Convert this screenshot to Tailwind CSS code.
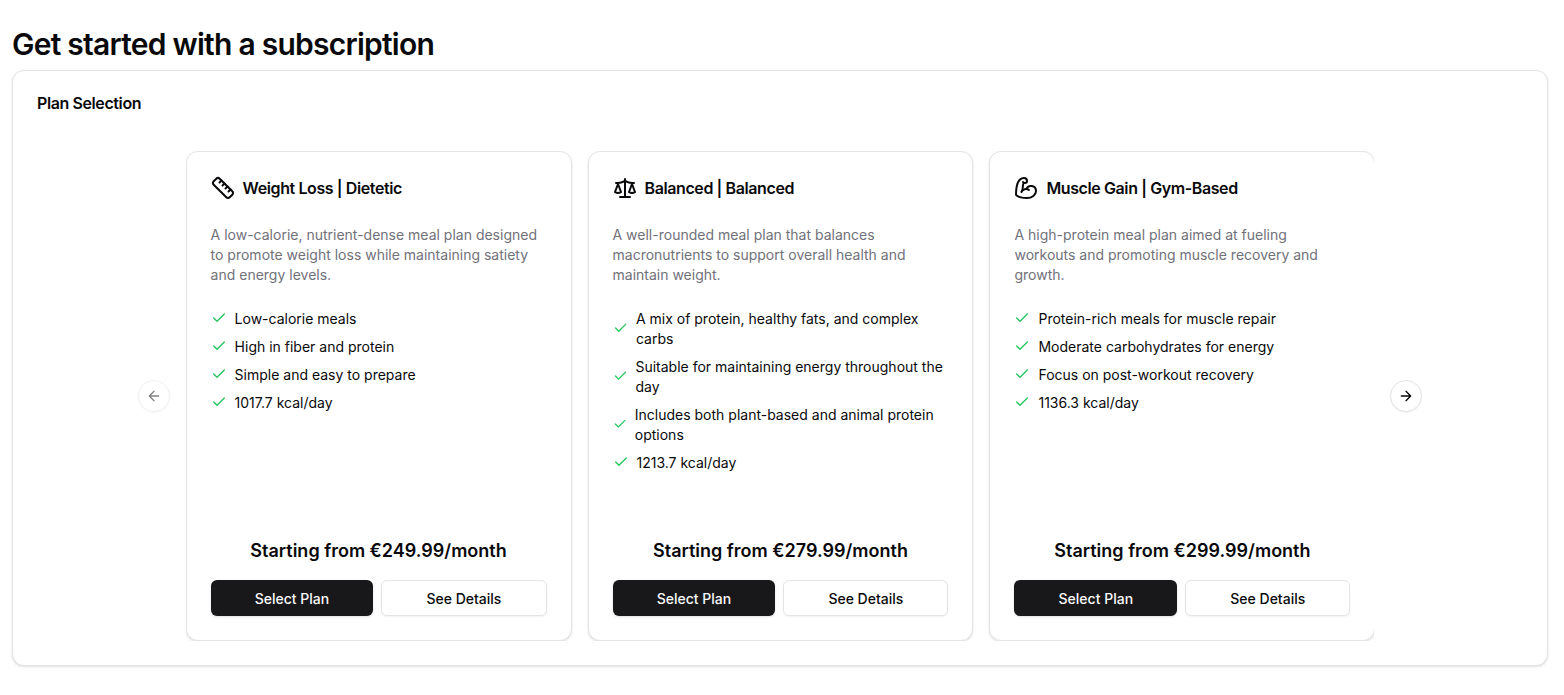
<!DOCTYPE html>
<html lang="en">
<head>
<meta charset="utf-8">
<meta name="viewport" content="width=device-width, initial-scale=1">
<title>Get started with a subscription</title>
<script src="https://cdn.jsdelivr.net/npm/@tailwindcss/browser@4"></script>
</head>
<body class="bg-white font-['Inter',sans-serif] text-[#09090b]">
<svg class="hidden" aria-hidden="true">
  <symbol id="check" viewBox="0 0 24 24" fill="none" stroke="currentColor" stroke-width="2" stroke-linecap="round" stroke-linejoin="round"><path d="M20 6 9 17l-5-5"/></symbol>
</svg>
<main class="pt-[26px] pr-4 pb-7 pl-3">
  <h1 class="text-3xl font-semibold tracking-tight">Get started with a subscription</h1>
  <section class="mt-2 rounded-xl border border-[#e4e4e7] bg-white shadow-sm">
    <h2 class="p-6 leading-none font-semibold tracking-tight">Plan Selection</h2>
    <div class="flex items-center justify-center gap-4 px-6 pt-4 pb-6">
      <button type="button" disabled aria-label="Previous slide" class="flex size-8 shrink-0 items-center justify-center rounded-full border border-[#e4e4e7] bg-white opacity-50 shadow-xs">
        <svg class="size-4" viewBox="0 0 24 24" fill="none" stroke="currentColor" stroke-width="2" stroke-linecap="round" stroke-linejoin="round"><path d="m12 19-7-7 7-7M19 12H5"/></svg>
      </button>
      <div class="w-4/5 overflow-hidden">
        <div class="-mr-px grid grid-cols-3 gap-4">
          <article class="flex flex-col rounded-xl border border-[#e4e4e7] bg-white p-6 shadow-sm">
            <h3 class="flex items-center gap-2 leading-none font-semibold tracking-tight">
              <svg class="size-6 shrink-0" viewBox="0 0 24 24" fill="none" stroke="currentColor" stroke-width="2" stroke-linecap="round" stroke-linejoin="round"><path d="M21.3 15.3a2.4 2.4 0 0 1 0 3.4l-2.6 2.6a2.4 2.4 0 0 1-3.4 0L2.7 8.7a2.41 2.41 0 0 1 0-3.4l2.6-2.6a2.41 2.41 0 0 1 3.4 0Z"/><path d="m14.5 12.5 2-2"/><path d="m11.5 9.5 2-2"/><path d="m8.5 6.5 2-2"/><path d="m17.5 15.5 2-2"/></svg>
              Weight Loss | Dietetic
            </h3>
            <p class="mt-[25px] text-sm text-[#71717a]">A low-calorie, nutrient-dense meal plan designed to promote weight loss while maintaining satiety and energy levels.</p>
            <ul class="mt-6 mb-16 flex flex-col gap-2 text-sm">
              <li class="flex items-center gap-2"><svg class="mb-0.5 h-4 w-4 text-[#22c55e]"><use href="#check"/></svg><span>Low-calorie meals</span></li>
              <li class="flex items-center gap-2"><svg class="mb-0.5 h-4 w-4 text-[#22c55e]"><use href="#check"/></svg><span>High in fiber and protein</span></li>
              <li class="flex items-center gap-2"><svg class="mb-0.5 h-4 w-4 text-[#22c55e]"><use href="#check"/></svg><span>Simple and easy to prepare</span></li>
              <li class="flex items-center gap-2"><svg class="mb-0.5 h-4 w-4 text-[#22c55e]"><use href="#check"/></svg><span>1017.7 kcal/day</span></li>
            </ul>
            <p class="mt-auto text-center text-lg font-semibold">Starting from €249.99/month</p>
            <div class="mt-[15px] flex gap-2">
              <button type="button" class="h-9 grow rounded-md bg-[#18181b] px-4 pt-0.5 text-sm font-medium text-[#fafafa] shadow-sm">Select Plan</button>
              <button type="button" class="h-9 grow rounded-md border border-[#e4e4e7] bg-white px-4 pt-0.5 text-sm font-medium shadow-xs">See Details</button>
            </div>
          </article>
          <article class="flex flex-col rounded-xl border border-[#e4e4e7] bg-white p-6 shadow-sm">
            <h3 class="flex items-center gap-2 leading-none font-semibold tracking-tight">
              <svg class="size-6 shrink-0" viewBox="0 0 24 24" fill="none" stroke="currentColor" stroke-width="2" stroke-linecap="round" stroke-linejoin="round"><path d="m16 16 3-8 3 8c-.87.65-1.92 1-3 1s-2.13-.35-3-1Z"/><path d="m2 16 3-8 3 8c-.87.65-1.92 1-3 1s-2.13-.35-3-1Z"/><path d="M7 21h10"/><path d="M12 3v18"/><path d="M3 7h2c2 0 5-1 7-2 2 1 5 2 7 2h2"/></svg>
              Balanced | Balanced
            </h3>
            <p class="mt-[25px] text-sm text-[#71717a]">A well-rounded meal plan that balances macronutrients to support overall health and maintain weight.</p>
            <ul class="mt-6 mb-16 flex flex-col gap-2 text-sm">
              <li class="flex items-center gap-2"><svg class="mb-0.5 h-4 w-4 text-[#22c55e]"><use href="#check"/></svg><span>A mix of protein, healthy fats, and complex carbs</span></li>
              <li class="flex items-center gap-2"><svg class="mb-0.5 h-4 w-4 text-[#22c55e]"><use href="#check"/></svg><span>Suitable for maintaining energy throughout the day</span></li>
              <li class="flex items-center gap-2"><svg class="mb-0.5 h-4 w-4 text-[#22c55e]"><use href="#check"/></svg><span>Includes both plant-based and animal protein options</span></li>
              <li class="flex items-center gap-2"><svg class="mb-0.5 h-4 w-4 text-[#22c55e]"><use href="#check"/></svg><span>1213.7 kcal/day</span></li>
            </ul>
            <p class="mt-auto text-center text-lg font-semibold">Starting from €279.99/month</p>
            <div class="mt-[15px] flex gap-2">
              <button type="button" class="h-9 grow rounded-md bg-[#18181b] px-4 pt-0.5 text-sm font-medium text-[#fafafa] shadow-sm">Select Plan</button>
              <button type="button" class="h-9 grow rounded-md border border-[#e4e4e7] bg-white px-4 pt-0.5 text-sm font-medium shadow-xs">See Details</button>
            </div>
          </article>
          <article class="flex flex-col rounded-xl border border-[#e4e4e7] bg-white p-6 shadow-sm">
            <h3 class="flex items-center gap-2 leading-none font-semibold tracking-tight">
              <svg class="size-6 shrink-0" viewBox="0 0 24 24" fill="none" stroke="currentColor" stroke-width="2" stroke-linecap="round" stroke-linejoin="round"><path d="M12.409 13.017A5 5 0 0 1 22 15c0 3.866-4 7-9 7-4.077 0-8.153-.82-10.371-2.462-.426-.316-.631-.832-.62-1.362C2.118 12.723 2.627 2 10 2a3 3 0 0 1 3 3 2 2 0 0 1-2 2c-1.105 0-1.64-.444-2-1"/><path d="M15 14a5 5 0 0 0-7.584 2"/><path d="M9.964 6.825C8.019 7.977 9.5 13 8 15"/></svg>
              Muscle Gain | Gym-Based
            </h3>
            <p class="mt-[25px] text-sm text-[#71717a]">A high-protein meal plan aimed at fueling workouts and promoting muscle recovery and growth.</p>
            <ul class="mt-6 mb-16 flex flex-col gap-2 text-sm">
              <li class="flex items-center gap-2"><svg class="mb-0.5 h-4 w-4 text-[#22c55e]"><use href="#check"/></svg><span>Protein-rich meals for muscle repair</span></li>
              <li class="flex items-center gap-2"><svg class="mb-0.5 h-4 w-4 text-[#22c55e]"><use href="#check"/></svg><span>Moderate carbohydrates for energy</span></li>
              <li class="flex items-center gap-2"><svg class="mb-0.5 h-4 w-4 text-[#22c55e]"><use href="#check"/></svg><span>Focus on post-workout recovery</span></li>
              <li class="flex items-center gap-2"><svg class="mb-0.5 h-4 w-4 text-[#22c55e]"><use href="#check"/></svg><span>1136.3 kcal/day</span></li>
            </ul>
            <p class="mt-auto text-center text-lg font-semibold">Starting from €299.99/month</p>
            <div class="mt-[15px] flex gap-2">
              <button type="button" class="h-9 grow rounded-md bg-[#18181b] px-4 pt-0.5 text-sm font-medium text-[#fafafa] shadow-sm">Select Plan</button>
              <button type="button" class="h-9 grow rounded-md border border-[#e4e4e7] bg-white px-4 pt-0.5 text-sm font-medium shadow-xs">See Details</button>
            </div>
          </article>
        </div>
      </div>
      <button type="button" aria-label="Next slide" class="flex size-8 shrink-0 items-center justify-center rounded-full border border-[#e4e4e7] bg-white shadow-xs">
        <svg class="size-4" viewBox="0 0 24 24" fill="none" stroke="currentColor" stroke-width="2" stroke-linecap="round" stroke-linejoin="round"><path d="M5 12h14M12 5l7 7-7 7"/></svg>
      </button>
    </div>
  </section>
</main>
</body>
</html>
